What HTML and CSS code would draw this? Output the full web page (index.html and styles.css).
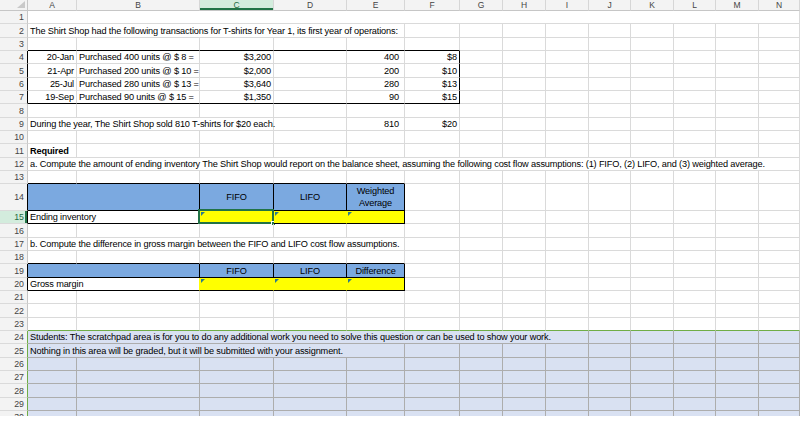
FILE: index.html
```html
<!DOCTYPE html>
<html>
<head>
<meta charset="utf-8">
<link rel="stylesheet" href="styles.css">
</head>
<body>
<div class="sheet">
<table>
<colgroup>
<col style="width:28px"><col style="width:49px"><col style="width:123px"><col style="width:74px"><col style="width:73px"><col style="width:58px"><col style="width:55px"><col style="width:43px"><col style="width:43px"><col style="width:43px"><col style="width:42px"><col style="width:43px"><col style="width:42px"><col style="width:43px"><col style="width:41px">
</colgroup>
<tr class="hdr"><th class="corner"><span class="tri"></span></th><th class="ch">A</th><th class="ch">B</th><th class="ch selc">C</th><th class="ch">D</th><th class="ch">E</th><th class="ch">F</th><th class="ch">G</th><th class="ch">H</th><th class="ch">I</th><th class="ch">J</th><th class="ch">K</th><th class="ch">L</th><th class="ch">M</th><th class="ch">N</th></tr>
<tr><th class="rh">1</th><td colspan="14"></td></tr>
<tr><th class="rh">2</th><td colspan="5">The Shirt Shop had the following transactions for T-shirts for Year 1, its first year of operations:</td><td></td><td></td><td></td><td></td><td></td><td></td><td></td><td></td><td></td></tr>
<tr><th class="rh">3</th><td class="bb"></td><td class="bb"></td><td class="bb"></td><td class="bb"></td><td class="bb"></td><td class="bb"></td><td></td><td></td><td></td><td></td><td></td><td></td><td></td><td></td></tr>
<tr><th class="rh bl">4</th><td class="r">20-Jan</td><td>Purchased 400 units @ $ 8 =</td><td class="r">$3,200</td><td></td><td class="r e">400</td><td class="r br">$8</td><td></td><td></td><td></td><td></td><td></td><td></td><td></td><td></td></tr>
<tr><th class="rh bl">5</th><td class="r">21-Apr</td><td>Purchased 200 units @ $ 10 =</td><td class="r">$2,000</td><td></td><td class="r e">200</td><td class="r br">$10</td><td></td><td></td><td></td><td></td><td></td><td></td><td></td><td></td></tr>
<tr><th class="rh bl">6</th><td class="r">25-Jul</td><td>Purchased 280 units @ $ 13 =</td><td class="r">$3,640</td><td></td><td class="r e">280</td><td class="r br">$13</td><td></td><td></td><td></td><td></td><td></td><td></td><td></td><td></td></tr>
<tr><th class="rh bl">7</th><td class="r bb">19-Sep</td><td class="bb">Purchased 90 units @ $ 15 =</td><td class="r bb">$1,350</td><td class="bb"></td><td class="r e bb">90</td><td class="r br bb">$15</td><td></td><td></td><td></td><td></td><td></td><td></td><td></td><td></td></tr>
<tr><th class="rh">8</th><td></td><td></td><td></td><td></td><td></td><td></td><td></td><td></td><td></td><td></td><td></td><td></td><td></td><td></td></tr>
<tr><th class="rh">9</th><td colspan="3">During the year, The Shirt Shop sold 810 T-shirts for $20 each.</td><td></td><td class="r e">810</td><td class="r">$20</td><td></td><td></td><td></td><td></td><td></td><td></td><td></td><td></td></tr>
<tr><th class="rh">10</th><td></td><td></td><td></td><td></td><td></td><td></td><td></td><td></td><td></td><td></td><td></td><td></td><td></td><td></td></tr>
<tr><th class="rh">11</th><td class="b">Required</td><td></td><td></td><td></td><td></td><td></td><td></td><td></td><td></td><td></td><td></td><td></td><td></td><td></td></tr>
<tr><th class="rh">12</th><td colspan="14">a. Compute the amount of ending inventory The Shirt Shop would report on the balance sheet, assuming the following cost flow assumptions: (1) FIFO, (2) LIFO, and (3) weighted average.</td></tr>
<tr><th class="rh">13</th><td class="bb"></td><td class="bb"></td><td class="bb"></td><td class="bb"></td><td class="bb"></td><td></td><td></td><td></td><td></td><td></td><td></td><td></td><td></td><td></td></tr>
<tr class="tall"><th class="rh bl mid">14</th><td colspan="2" class="blue br bb"></td><td class="blue br bb c mid">FIFO</td><td class="blue br bb c mid">LIFO</td><td class="blue br bb c mid two">Weighted<br>Average</td><td></td><td></td><td></td><td></td><td></td><td></td><td></td><td></td><td></td></tr>
<tr><th class="rh bl selr">15</th><td colspan="2" class="bb yr">Ending inventory</td><td class="yel bb err sel"><span class="selbox"></span><span class="handle"></span></td><td class="yel bb err yr"></td><td class="yel bb br err"></td><td></td><td></td><td></td><td></td><td></td><td></td><td></td><td></td><td></td></tr>
<tr><th class="rh">16</th><td></td><td></td><td></td><td></td><td></td><td></td><td></td><td></td><td></td><td></td><td></td><td></td><td></td><td></td></tr>
<tr><th class="rh">17</th><td colspan="5">b. Compute the difference in gross margin between the FIFO and LIFO cost flow assumptions.</td><td></td><td></td><td></td><td></td><td></td><td></td><td></td><td></td><td></td></tr>
<tr><th class="rh">18</th><td class="bb"></td><td class="bb"></td><td class="bb"></td><td class="bb"></td><td class="bb"></td><td></td><td></td><td></td><td></td><td></td><td></td><td></td><td></td><td></td></tr>
<tr><th class="rh bl">19</th><td colspan="2" class="blue br bb"></td><td class="blue br bb c">FIFO</td><td class="blue br bb c">LIFO</td><td class="blue br bb c">Difference</td><td></td><td></td><td></td><td></td><td></td><td></td><td></td><td></td><td></td></tr>
<tr><th class="rh bl">20</th><td colspan="2" class="bb yr">Gross margin</td><td class="yel bb err yr"></td><td class="yel bb err yr"></td><td class="yel bb br err"></td><td></td><td></td><td></td><td></td><td></td><td></td><td></td><td></td><td></td></tr>
<tr><th class="rh">21</th><td></td><td></td><td></td><td></td><td></td><td></td><td></td><td></td><td></td><td></td><td></td><td></td><td></td><td></td></tr>
<tr><th class="rh">22</th><td></td><td></td><td></td><td></td><td></td><td></td><td></td><td></td><td></td><td></td><td></td><td></td><td></td><td></td></tr>
<tr><th class="rh">23</th><td class="gb"></td><td class="gb"></td><td class="gb"></td><td class="gb"></td><td class="gb"></td><td class="gb"></td><td class="gb"></td><td class="gb"></td><td class="gb"></td><td class="gb"></td><td class="gb"></td><td class="gb"></td><td class="gb"></td><td class="gb"></td></tr>
<tr class="sp"><th class="rh gl">24</th><td colspan="9">Students: The scratchpad area is for you to do any additional work you need to solve this question or can be used to show your work.</td><td></td><td></td><td></td><td></td><td></td></tr>
<tr class="sp"><th class="rh gl">25</th><td colspan="5">Nothing in this area will be graded, but it will be submitted with your assignment.</td><td></td><td></td><td></td><td></td><td></td><td></td><td></td><td></td><td></td></tr>
<tr class="sp"><th class="rh gl">26</th><td></td><td></td><td></td><td></td><td></td><td></td><td></td><td></td><td></td><td></td><td></td><td></td><td></td><td></td></tr>
<tr class="sp"><th class="rh gl">27</th><td></td><td></td><td></td><td></td><td></td><td></td><td></td><td></td><td></td><td></td><td></td><td></td><td></td><td></td></tr>
<tr class="sp"><th class="rh gl">28</th><td></td><td></td><td></td><td></td><td></td><td></td><td></td><td></td><td></td><td></td><td></td><td></td><td></td><td></td></tr>
<tr class="sp"><th class="rh gl">29</th><td></td><td></td><td></td><td></td><td></td><td></td><td></td><td></td><td></td><td></td><td></td><td></td><td></td><td></td></tr>
<tr class="sp"><th class="rh gl">30</th><td></td><td></td><td></td><td></td><td></td><td></td><td></td><td></td><td></td><td></td><td></td><td></td><td></td><td></td></tr>
</table>
</div>
</body>
</html>
```
FILE: styles.css
```css
html, body {
  margin: 0;
  padding: 0;
  background: #ffffff;
}
body {
  font-family: "Liberation Sans", Arial, sans-serif;
}
.sheet {
  width: 800px;
  height: 416px;
  overflow: hidden;
}
table {
  border-collapse: separate;
  border-spacing: 0;
  table-layout: fixed;
  width: 800px;
}
tr {
  height: 13.333px;
}
tr.hdr {
  height: 11px;
}
tr.tall {
  height: 26.667px;
}
td, th {
  box-sizing: border-box;
  padding: 0 2px;
  white-space: nowrap;
  overflow: visible;
  font-size: 9.2px;
  letter-spacing: -0.15px;
  line-height: 12px;
  vertical-align: bottom;
  text-align: left;
  font-weight: normal;
  color: #000;
  border-right: 1px solid #dadada;
  border-bottom: 1px solid #dadada;
  position: relative;
}
th {
  background: #f3f3f3;
  color: #444;
}
th.ch {
  font-size: 8.5px;
  letter-spacing: 0;
  text-align: center;
  vertical-align: middle;
  line-height: 10px;
  border-right: 1px solid #d6d6d6;
  border-bottom: 1px solid #c6c6c6;
}
th.corner {
  border-right: 1px solid #c6c6c6;
  border-bottom: 1px solid #c6c6c6;
}
.tri {
  position: absolute;
  right: 2px;
  bottom: 2px;
  width: 0;
  height: 0;
  border-left: 8px solid transparent;
  border-bottom: 7px solid #c9c9c9;
}
th.selc {
  background: #d3ecdd;
  color: #1e6b40;
  box-shadow: inset 0 -2px 0 #217346;
}
th.rh {
  font-size: 8.8px;
  letter-spacing: 0;
  text-align: right;
  padding-right: 3px;
  border-right: 1px solid #c6c6c6;
  border-bottom: 1px solid #dadada;
  color: #444;
}
th.selr {
  background: #d3ecdd;
  color: #1e6b40;
  box-shadow: inset -2px 0 0 #217346;
}
th.bl {
  border-right-color: #000;
}
th.gl {
  border-right-color: #70ad47;
}
.r { text-align: right; }
.c { text-align: center; }
.e { padding-right: 5px; }
.b { font-weight: bold; }
.mid { vertical-align: middle; }
.two { line-height: 12.5px; }
.bb { border-bottom-color: #000; }
.br { border-right-color: #000; }
.gb { border-bottom-color: #70ad47; }
.blue { background: #7ba9e0; }
.yel { background: #ffff00; }
.yr { border-right-color: #ffff00; }
.sp td {
  background: #d9e1f2;
  border-right-color: #adadad;
  border-bottom-color: #adadad;
}
.err::before {
  content: "";
  position: absolute;
  left: 1px;
  top: 1px;
  width: 0;
  height: 0;
  border-top: 4px solid #2a7d8c;
  border-right: 4px solid transparent;
}
.selbox {
  position: absolute;
  left: -2px;
  top: -2px;
  right: -1px;
  bottom: -1px;
  border: 2px solid #217346;
}
.handle {
  position: absolute;
  right: -3px;
  bottom: -3px;
  width: 3px;
  height: 3px;
  background: #217346;
  border: 1px solid #ffffff;
}
```
